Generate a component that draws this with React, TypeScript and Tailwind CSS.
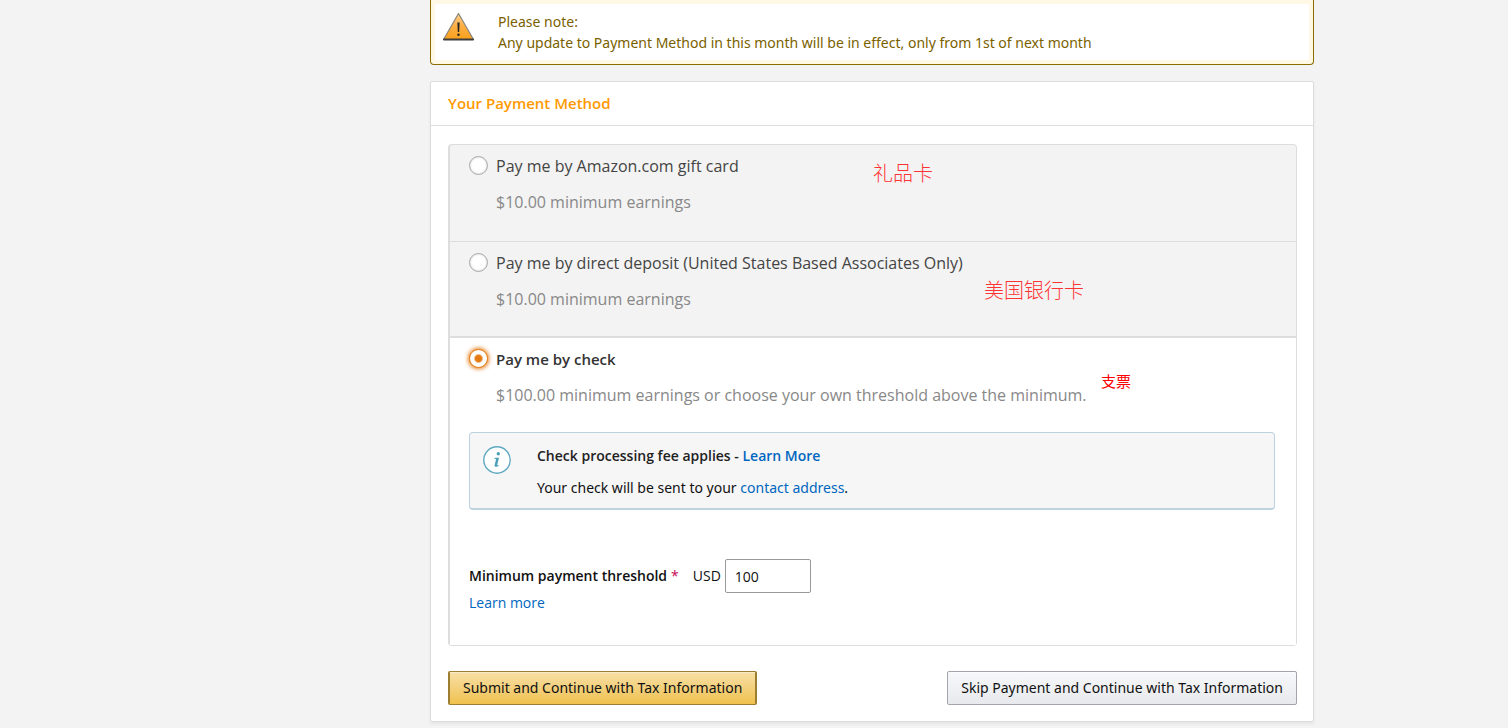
import * as React from 'react';

interface PaymentOptionProps {
  id: string;
  label: string;
  minimum: string;
  checked: boolean;
  onSelect: (id: string) => void;
  note?: React.ReactNode;
  children?: React.ReactNode;
}

const WarningIcon = () => (
  <svg width="32" height="30" viewBox="0 0 32 30" aria-hidden="true">
    <defs>
      <linearGradient id="warning-fill" x1="0" y1="0" x2="0" y2="1">
        <stop offset="0" stopColor="#ffd08a" />
        <stop offset="0.5" stopColor="#fcae42" />
        <stop offset="1" stopColor="#f9a01b" />
      </linearGradient>
    </defs>
    <path d="M15.5 2.5 30.5 28.5H.5Z" fill="url(#warning-fill)" stroke="#8a857c" strokeWidth="1.2" strokeLinejoin="round" />
    <path d="M1 28.5h29" stroke="#3d3d3d" strokeWidth="2" strokeLinecap="round" />
    <path d="M14.4 11.5h2.2l-.4 9.5h-1.4z" fill="#222" />
    <circle cx="15.5" cy="23.8" r="1.2" fill="#222" />
  </svg>
);

const InfoIcon = () => (
  <svg width="28" height="28" viewBox="0 0 28 28" aria-hidden="true">
    <circle cx="14" cy="14" r="13.2" fill="#fff" stroke="#5fa9c0" strokeWidth="1.4" />
    <circle cx="15.3" cy="7.8" r="1.7" fill="#4d9fb8" />
    <path d="M11.6 11.8h4.4l-1.9 7.6 1.7-.3-.2 1c-1.2.8-4.4 1.5-4-.8l1.5-6.3-1.7-.3z" fill="#4d9fb8" />
  </svg>
);

const PaymentOption = ({ id, label, minimum, checked, onSelect, note, children }: PaymentOptionProps) => {
  return (
    <div
      className={
        checked
          ? 'border-t-2 border-[#ddd] bg-white pt-[9px] pr-[21px] pb-8 pl-[19px]'
          : 'h-24 border-[#ddd] pt-[9px] pr-[21px] pl-[19px] not-first:h-[95px] not-first:border-t'
      }
    >
      <div className="relative">
        <label htmlFor={id} className="flex items-start gap-2">
          <input
            type="radio"
            id={id}
            name="payment-method"
            checked={checked}
            onChange={() => onSelect(id)}
            className="mt-[2px] h-[19px] w-[19px] shrink-0 appearance-none rounded-full border border-[#aaa] bg-white shadow-[inset_0_0_2px_rgba(0,0,0,0.25)] checked:border-[#e47911] checked:bg-[radial-gradient(circle,#e47911_3px,#fff_5px)] checked:shadow-[0_0_4px_1px_#e47911]"
          />
          <span className={checked ? 'text-[15px] font-semibold text-[#333]' : 'text-[#444]'}>{label}</span>
        </label>
        <p className="mt-3 pl-[27px] text-[#888]">{minimum}</p>
        {note}
      </div>
      {children}
    </div>
  );
};

export default function App() {
  const [method, setMethod] = React.useState('check');
  const [threshold, setThreshold] = React.useState('100');

  return (
    <div className="min-h-screen bg-[#f3f3f3] font-['Noto_Sans','Noto_Sans_CJK_SC',sans-serif] text-sm text-[#111]">
      <main className="mx-auto max-w-[1120px] pb-1 pl-[236px]">
        <div className="flex rounded-b border border-t-0 border-[#8a6d00] bg-white px-3 py-[11px] leading-[21px] text-[#7a5f00] shadow-[inset_0_0_0_4px_#fff8e5]">
          <WarningIcon />
          <div className="pl-[23px]">
            <p>Please note:</p>
            <p>Any update to Payment Method in this month will be in effect, only from 1st of next month</p>
          </div>
        </div>

        <section className="mt-4 rounded-xs border border-[#ddd] bg-white shadow-[0_2px_3px_rgba(0,0,0,0.06)]">
          <h2 className="border-b border-[#ddd] px-[17px] py-[10px] font-['Open_Sans',sans-serif] text-[15px] leading-[23px] font-semibold text-[#ff9900]">
            Your Payment Method
          </h2>
          <form className="pt-[18px] pr-4 pb-4 pl-[17px]" onSubmit={e => e.preventDefault()}>
            <div className="rounded border border-l-2 border-[#ddd] bg-[#f3f3f3] font-['Open_Sans','Noto_Sans_CJK_SC',sans-serif] text-base leading-6">
              <PaymentOption
                id="gift-card"
                label="Pay me by Amazon.com gift card"
                minimum="$10.00 minimum earnings"
                checked={method === 'gift-card'}
                onSelect={setMethod}
                note={<span className="absolute top-[6px] left-[404px] text-xl font-light text-[#ff3333]">礼品卡</span>}
              />
              <PaymentOption
                id="direct-deposit"
                label="Pay me by direct deposit (United States Based Associates Only)"
                minimum="$10.00 minimum earnings"
                checked={method === 'direct-deposit'}
                onSelect={setMethod}
                note={<span className="absolute top-[26px] left-[515px] text-xl font-light text-[#ff3333]">美国银行卡</span>}
              />
              <PaymentOption
                id="check"
                label="Pay me by check"
                minimum="$100.00 minimum earnings or choose your own threshold above the minimum."
                checked={method === 'check'}
                onSelect={setMethod}
                note={<span className="absolute top-[22px] left-[632px] text-[15px] text-[#ff0000]">支票</span>}
              >
                <div className="mt-[25px] flex rounded border border-b-2 border-[#bcd3df] bg-[#f6f6f6] px-[13px] pt-[13px] pb-[10px] text-sm leading-5">
                  <InfoIcon />
                  <div className="pl-[26px]">
                    <p className="font-semibold text-[#222]">
                      Check processing fee applies -{' '}
                      <a href="#fees" className="text-[#0066c0]">
                        Learn More
                      </a>
                    </p>
                    <p className="mt-3 font-['Noto_Sans',sans-serif]">
                      Your check will be sent to your{' '}
                      <a href="#address" className="text-[#0066c0]">
                        contact address
                      </a>
                      .
                    </p>
                  </div>
                </div>
                <div className="mt-[49px] flex items-center text-sm">
                  <label htmlFor="threshold" className="flex items-center">
                    <span className="font-semibold">Minimum payment threshold</span>
                    <span className="ml-1 text-[#c40050]">*</span>
                    <span className="ml-[14px]">USD</span>
                  </label>
                  <input
                    type="text"
                    id="threshold"
                    value={threshold}
                    onChange={e => setThreshold(e.target.value)}
                    className="ml-1 h-[34px] w-[86px] rounded-xs border border-[#999] bg-white px-[9px]"
                  />
                </div>
                <a href="#threshold-help" className="block w-fit text-sm text-[#0066c0]">
                  Learn more
                </a>
              </PaymentOption>
            </div>
            <div className="mt-[25px] flex justify-between">
              <button
                type="submit"
                className="h-[34px] rounded-xs border border-x-2 border-[#9c7e31] bg-linear-to-b from-[#f7dfa5] to-[#f0c14b] px-[13px] shadow-[inset_0_1px_0_rgba(255,255,255,0.4)]"
              >
                Submit and Continue with Tax Information
              </button>
              <button
                type="button"
                className="h-[34px] rounded-xs border border-[#a2a6ac] bg-linear-to-b from-[#f7f8fa] to-[#e7e9ec] px-[13px] shadow-[inset_0_1px_0_rgba(255,255,255,0.6)]"
              >
                Skip Payment and Continue with Tax Information
              </button>
            </div>
          </form>
        </section>
      </main>
    </div>
  );
}
